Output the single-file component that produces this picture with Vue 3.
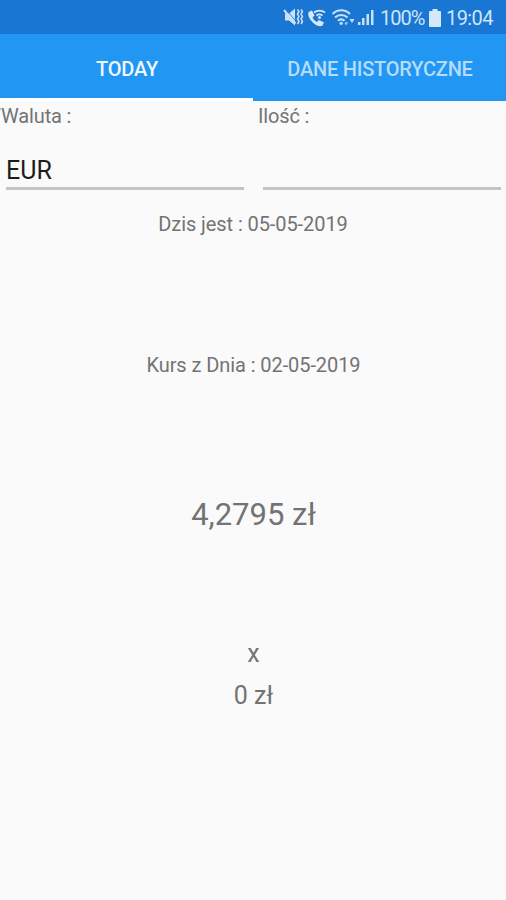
<template>
  <div class="screen">
    <header class="status-bar">
      <svg class="status-icons" viewBox="0 0 98 24" width="98" height="24">
        <!-- muted, vibrating speaker -->
        <g fill="#c9e1f8">
          <path d="M4 8.500h4l6-5v17l-6-5H4z" />
          <path d="M5 4.500l10 12" stroke="#1976d2" stroke-width="0.800" fill="none" />
          <path d="M3 5l11.500 13.500" stroke="#c9e1f8" stroke-width="2" fill="none" />
          <path d="M16.500 4.500l1.500 2-1.500 2.500 1.500 2.500-1.500 2.500 1.500 2.500-1.500 2.500M20 4.500l1.500 2-1.500 2.500 1.500 2.500-1.500 2.500 1.500 2.500-1.500 2.500" stroke="#c9e1f8" stroke-width="1.500" fill="none" />
        </g>
        <!-- wifi calling -->
        <path fill="#d5e8fa" d="M27.500 7l3.500-1.500 2.500 5-2 2c1 2 2.500 3.500 4.500 4.500l2-2 5 2.500-1.500 3c-2 1.500-5.500 0.500-8.500-2-4-3.500-6.500-7.500-5.500-11.500z" />
        <g fill="none" stroke="#d5e8fa" stroke-width="1.700">
          <path d="M33 7.500c3-2.500 8-2.500 11 0M35.500 10.500c2-1.500 4-1.500 6 0" />
        </g>
        <circle cx="38.500" cy="12.500" r="1.500" fill="#d5e8fa" />
        <!-- wifi -->
        <g fill="none" stroke="#c9e1f8" stroke-width="2">
          <path d="M51.500 9c5-5 12.500-5 17.500 0M54 12.500c3.500-3.300 9-3.300 12.500 0M57 15.800c2-1.800 4.500-1.800 6.500 0" />
        </g>
        <circle cx="60.200" cy="18.300" r="1.600" fill="#c9e1f8" />
        <path fill="#8fc1ef" d="M65 16.500l2 1.500-2 2.500-1.500-2z" />
        <path fill="#c9e1f8" d="M68.500 14h5l-2.500 4z" />
        <g fill="#c9e1f8">
          <rect x="77" y="17" width="2.500" height="3" />
          <rect x="81" y="13" width="2.500" height="7" />
          <rect x="85.500" y="9" width="2.500" height="11" />
          <rect x="90" y="5" width="2.500" height="15" />
        </g>
      </svg>
      <span class="battery-level">100%</span>
      <svg class="battery" viewBox="0 0 12 18" width="12" height="18">
        <path fill="#d5e8fa" d="M3.500 0h5v2H11q1 0 1 1v14q0 1-1 1H1q-1 0-1-1V3q0-1 1-1h2.500z" />
      </svg>
      <span class="clock">19:04</span>
    </header>

    <nav class="tabs">
      <button
        v-for="tab in tabs"
        :key="tab.id"
        :class="['tab', { active: tab.id === activeTab }]"
        @click="activeTab = tab.id"
      >
        {{ tab.label }}
      </button>
    </nav>

    <main class="content">
      <div class="form">
        <label class="field">
          <span class="field-label currency-label">/Waluta :</span>
          <input v-model="currency" class="field-input" type="text">
        </label>
        <label class="field">
          <span class="field-label">Ilość :</span>
          <input v-model="amount" class="field-input" type="text">
        </label>
      </div>
      <p class="date today">Dzis jest : 05-05-2019</p>
      <p class="date rate-date">Kurs z Dnia : 02-05-2019</p>
      <p class="rate">4,2795 zł</p>
      <p class="times">x</p>
      <p class="total">0 zł</p>
    </main>
  </div>
</template>

<script setup>
import { ref } from 'vue'

const tabs = [
  { id: 'today', label: 'TODAY' },
  { id: 'history', label: 'DANE HISTORYCZNE' }
]

const activeTab = ref('today')
const currency = ref('EUR')
const amount = ref('')
</script>

<style>
body {
  margin: 0;
  background: #fafafa;
}
</style>

<style scoped>
.screen {
  width: 506px;
  height: 900px;
  overflow: hidden;
  background: #fafafa;
  color: #737373;
  font-family: Roboto, sans-serif;
}

.status-bar {
  display: flex;
  align-items: center;
  justify-content: flex-end;
  box-sizing: border-box;
  height: 34px;
  padding: 2px 13px 0 0;
  background: #1976d2;
  color: #cfe4f9;
  font-size: 20px;
}

.status-icons {
  margin-bottom: 2px;
}

.battery-level {
  width: 45px;
  margin-left: 1px;
  letter-spacing: -1px;
}

.battery {
  margin: 0 5px 0 4px;
}

.clock {
  width: 47px;
  letter-spacing: -0.6px;
}

.tabs {
  display: flex;
  height: 67px;
  background: #2196f3;
}

.tab {
  flex: 1;
  padding: 7px 0 0 1px;
  border: 0;
  border-bottom: 3px solid transparent;
  background: transparent;
  color: #b5dcfb;
  font-family: inherit;
  font-size: 20px;
  font-weight: 500;
  letter-spacing: -0.22px;
  line-height: 57px;
  white-space: nowrap;
}

.tab.active {
  border-bottom-color: #ffffff;
  color: #f0f8ff;
}

.form {
  display: flex;
}

.field {
  display: flex;
  flex-direction: column;
  width: 50%;
}

.field-label {
  padding-left: 5px;
  font-size: 20px;
  letter-spacing: -0.15px;
  line-height: 30px;
}

.currency-label {
  margin-left: -12px;
}

.field-input {
  height: 59px;
  box-sizing: border-box;
  margin: 0 5px 0 10px;
  padding: 22px 0 0;
  border: 0;
  border-bottom: 3px solid #c4c4c4;
  border-radius: 0;
  outline: 0;
  background: transparent;
  color: #1c1c1c;
  font-family: inherit;
  font-size: 25px;
}

.field:first-child .field-input {
  margin: 0 9px 0 6px;
}

p {
  margin: 0;
  text-align: center;
}

.date {
  font-size: 20px;
  letter-spacing: -0.08px;
  line-height: 24px;
}

.today {
  margin-top: 22px;
}

.rate-date {
  margin-top: 117px;
  padding-left: 1px;
}

.rate {
  margin-top: 119px;
  padding-left: 1px;
  font-size: 31px;
  line-height: 38px;
}

.times,
.total {
  padding-left: 1px;
  font-size: 25px;
  line-height: 30px;
}

.times {
  margin-top: 105px;
}

.total {
  margin-top: 12px;
}
</style>
